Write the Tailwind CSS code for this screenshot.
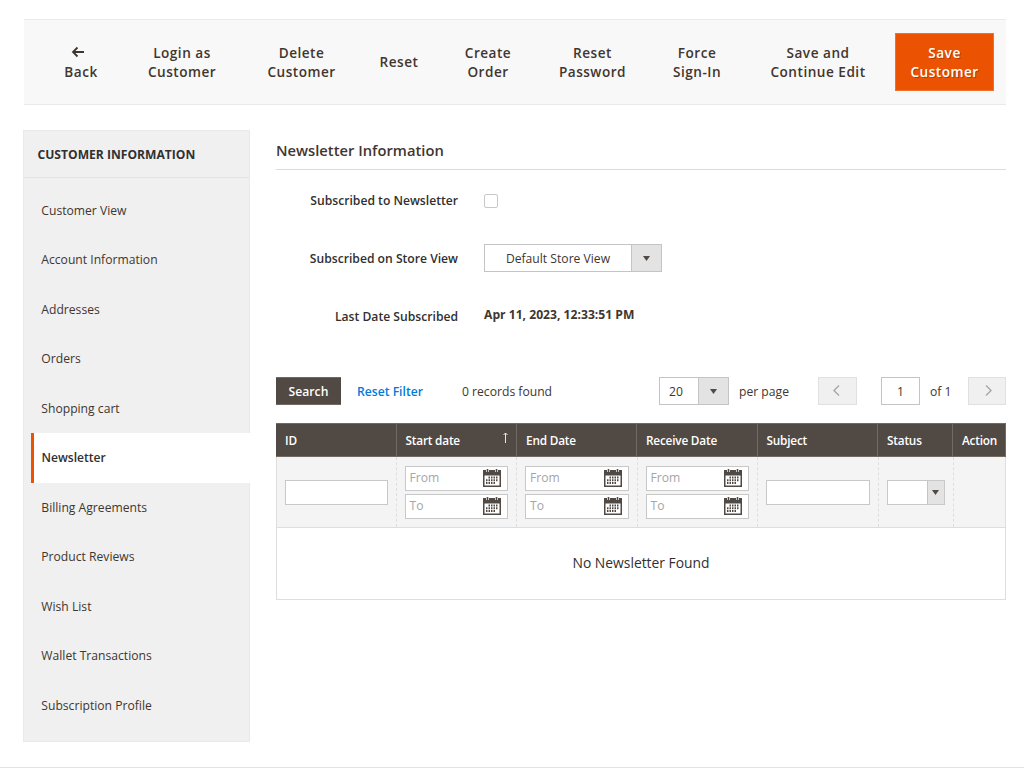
<!DOCTYPE html>
<html lang="en">
<head>
    <meta charset="UTF-8">
    <meta name="viewport" content="width=device-width, initial-scale=1.0">
    <title>Customer - Newsletter</title>
    <script src="https://cdn.jsdelivr.net/npm/@tailwindcss/browser@4"></script>
</head>
<body class="bg-white font-['Open_Sans','Noto_Sans',sans-serif] text-[12.150px] text-[#41362f] h-[768px] overflow-hidden">
    <svg class="hidden">
        <symbol id="calendar" viewBox="0 0 18 18">
            <path d="M0 1h18v17H0z" fill="#514943"/>
            <path d="M1.500 6.500h15v10h-15z" fill="#fff"/>
            <path d="M3 0h3v3H3zM12 0h3v3h-3z" fill="#c9c6c3"/>
            <path d="M4 0h1v4H4zM13 0h1v4h-1z" fill="#514943"/>
            <path d="M8 7.500h1.500v2H8zM10.500 7.500H12v2h-1.500zM13 7.500h1.500v2H13zM5.500 7.500H7v2H5.500zM5.500 10.200H7v2H5.500zM8 10.200h1.500v2H8zM10.500 10.200H12v2h-1.500zM13 10.200h1.500v2H13zM3 10.200h1.500v2H3zM3 13h1.500v2H3zM5.500 13H7v2H5.500zM8 13h1.500v2H8zM10.500 13H12v2h-1.500z" fill="#514943"/>
        </symbol>
    </svg>

    <!-- Page actions -->
    <header class="mt-[19px] ml-6 w-[982px] h-[86px] flex items-center bg-[#f8f8f8] border-y border-[#e9e9e9] pl-[7px] text-[13.600px] leading-[19px] font-semibold tracking-[0.5px] text-center text-[#41362f]">
        <button class="w-[100px] h-[40px]">
            <svg class="block mx-auto h-[18px] w-[14px] -translate-x-[3px] -translate-y-px" viewBox="0 0 14 18" fill="none" stroke="#41362f" stroke-width="1.800"><path d="M13 9H2M6.500 4.500L2 9l4.500 4.500"/></svg>
            <span class="block">Back</span>
        </button>
        <button class="w-[102px] pb-px">Login as<br>Customer</button>
        <button class="w-[137px] pb-px">Delete<br>Customer</button>
        <button class="w-[58px] pb-px">Reset</button>
        <button class="w-[120px] pb-px">Create<br>Order</button>
        <button class="w-[89px] pb-px">Reset<br>Password</button>
        <button class="w-[120px] pb-px">Force<br>Sign-In</button>
        <button class="w-[122px] pb-px">Save and<br>Continue Edit</button>
        <button class="ml-4 w-[99px] h-[58px] pb-px bg-[#eb5202] border border-[#f0702c] text-white [text-shadow:1px_1px_0_rgba(0,0,0,0.25)]">Save<br>Customer</button>
    </header>

    <div class="mt-[25px] ml-[23px] flex items-start">
        <!-- Tabs -->
        <aside class="w-[227px] h-[612px] shrink-0 bg-[#f0f0f0] border border-[#e9e9e9]">
            <h2 class="h-[47px] pl-[13.500px] leading-[47px] border-b border-[#e3e3e3] font-bold text-[12.100px] text-[#303030]">CUSTOMER INFORMATION</h2>
            <nav class="pt-[7.500px] leading-[49.550px] text-[#41362f]">
                <a class="block h-[49.550px] pl-[17.300px]">Customer View</a>
                <a class="block h-[49.550px] pl-[17.300px]">Account Information</a>
                <a class="block h-[49.550px] pl-[17.300px]">Addresses</a>
                <a class="block h-[49.550px] pl-[17.300px]">Orders</a>
                <a class="block h-[49.550px] pl-[17.300px]">Shopping cart</a>
                <a class="block h-[49.550px] ml-[6.500px] -mr-px pl-[8px] bg-white border-l-[3px] border-[#eb5202] font-semibold text-[12.100px] text-[#303030]">Newsletter</a>
                <a class="block h-[49.550px] pl-[17.300px]">Billing Agreements</a>
                <a class="block h-[49.550px] pl-[17.300px]">Product Reviews</a>
                <a class="block h-[49.550px] pl-[17.300px]">Wish List</a>
                <a class="block h-[49.550px] pl-[17.300px]">Wallet Transactions</a>
                <a class="block h-[49.550px] pl-[17.300px]">Subscription Profile</a>
            </nav>
        </aside>

        <main class="ml-[26px] pt-px w-[730px]">
            <h1 class="h-[39px] leading-[38px] border-b border-[#dcdccf] text-[14.750px] font-semibold text-[#41362f]">Newsletter Information</h1>

            <div class="grid grid-cols-[182px_1fr] gap-x-[26px] auto-rows-[58px] items-center pt-[2px] font-semibold text-[12.150px] text-[#303030]">
                <label class="text-right" for="subscribed">Subscribed to Newsletter</label>
                <input type="checkbox" id="subscribed" class="appearance-none size-[14px] bg-white border border-[#c8c8c8] rounded-[2px]">
                <label class="text-right pt-px">Subscribed on Store View</label>
                <div class="flex w-[178px] h-[28px] -mt-[2px] border border-[#c4c4c4] font-normal text-[12.150px] text-[#41362f]">
                    <span class="flex-1 leading-[27px] text-center">Default Store View</span>
                    <span class="w-[30px] flex items-center justify-center bg-[#e3e3e3] border-l border-[#c4c4c4]"><svg class="w-[7px] h-[5px]" viewBox="0 0 7 5"><path d="M0 0h7L3.500 5z" fill="#514943"/></svg></span>
                </div>
                <label class="text-right pt-px">Last Date Subscribed</label>
                <span class="-mt-[3px] font-bold text-[#41362f]">Apr 11, 2023, 12:33:51 PM</span>
            </div>

            <!-- Grid toolbar -->
            <div class="mt-[31px] h-[28px] flex leading-[29px]">
                <button class="w-[65px] bg-[#514943] border-y border-[#736963] leading-[27px] font-semibold text-[12.200px] text-white">Search</button>
                <button class="w-[66px] ml-4 font-semibold text-[12.150px] whitespace-nowrap text-[#007bdb]">Reset Filter</button>
                <span class="w-[158px] ml-[39px]">0 records found</span>
                <div class="w-[70px] ml-[39px] flex border border-[#c4c4c4] leading-[27px]">
                    <span class="flex-1 pl-[9px]">20</span>
                    <span class="w-[30px] flex items-center justify-center bg-[#e3e3e3] border-l border-[#c4c4c4]"><svg class="w-[7px] h-[5px]" viewBox="0 0 7 5"><path d="M0 0h7L3.500 5z" fill="#514943"/></svg></span>
                </div>
                <span class="w-[79px] pl-[10px]">per page</span>
                <button class="ml-[10px] w-[39px] flex items-center justify-center bg-[#f0f0f0] border border-[#e0e0e0]"><svg class="w-[7px] h-[11px] -translate-x-px -translate-y-px" viewBox="0 0 7 11" fill="none" stroke="#aaa6a2" stroke-width="1.400"><path d="M6 .5l-5 5 5 5"/></svg></button>
                <span class="ml-6 w-[39px] border border-[#c4c4c4] text-center leading-[27px]">1</span>
                <span class="w-[48px] pl-[10px]">of 1</span>
                <button class="w-[38px] flex items-center justify-center bg-[#f0f0f0] border border-[#e0e0e0]"><svg class="w-[7px] h-[11px] translate-x-px -translate-y-px" viewBox="0 0 7 11" fill="none" stroke="#aaa6a2" stroke-width="1.400"><path d="M1 .5l5 5-5 5"/></svg></button>
            </div>

            <!-- Newsletter grid -->
            <div class="mt-[18px]">
                <div class="grid grid-cols-[120.500px_120.500px_120px_120.500px_120.500px_75px_53px] h-[34px] leading-[32px] bg-[#514943] border-y border-[#736963] text-[11.800px] tracking-[-0.2px] font-semibold text-white *:pl-[9px] *:border-r *:border-[#736963]">
                    <div>ID</div>
                    <div class="flex">Start date
                        <svg class="ml-auto mr-[7px] mt-[8px] w-[7px] h-[11px]" viewBox="0 0 7 11" fill="none" stroke="#e8e6e4"><path d="M3.500 11V1M1.500 3L3.500 1 5.500 3"/></svg>
                    </div>
                    <div>End Date</div>
                    <div>Receive Date</div>
                    <div>Subject</div>
                    <div>Status</div>
                    <div>Action</div>
                </div>
                <div class="grid grid-cols-[119.500px_120.500px_120.500px_120.500px_120.500px_75px_52px] h-[71px] bg-[#f4f4f4] border-b border-x border-[#dedede] text-[12.150px] text-[#a6a6a6] *:px-[8px] *:flex *:flex-col *:justify-center *:gap-[3px] *:border-r *:border-dashed *:border-[#dedede]">
                    <div><span class="h-[25px] border border-[#c8c8c8] bg-white"></span></div>
                    <div>
                        <span class="h-[25px] border border-[#c8c8c8] bg-white flex items-center justify-between pl-[4px] pr-[6px]">From<svg class="size-[18px]"><use href="#calendar"/></svg></span>
                        <span class="h-[25px] border border-[#c8c8c8] bg-white flex items-center justify-between pl-[4px] pr-[6px]">To<svg class="size-[18px]"><use href="#calendar"/></svg></span>
                    </div>
                    <div>
                        <span class="h-[25px] border border-[#c8c8c8] bg-white flex items-center justify-between pl-[4px] pr-[6px]">From<svg class="size-[18px]"><use href="#calendar"/></svg></span>
                        <span class="h-[25px] border border-[#c8c8c8] bg-white flex items-center justify-between pl-[4px] pr-[6px]">To<svg class="size-[18px]"><use href="#calendar"/></svg></span>
                    </div>
                    <div>
                        <span class="h-[25px] border border-[#c8c8c8] bg-white flex items-center justify-between pl-[4px] pr-[6px]">From<svg class="size-[18px]"><use href="#calendar"/></svg></span>
                        <span class="h-[25px] border border-[#c8c8c8] bg-white flex items-center justify-between pl-[4px] pr-[6px]">To<svg class="size-[18px]"><use href="#calendar"/></svg></span>
                    </div>
                    <div><span class="h-[25px] border border-[#c8c8c8] bg-white"></span></div>
                    <div>
                        <span class="h-[25px] border border-[#c8c8c8] bg-white flex justify-end"><span class="w-[17px] flex items-center justify-center bg-[#e3e3e3] border-l border-[#c4c4c4]"><svg class="w-[7px] h-[5px]" viewBox="0 0 7 5"><path d="M0 0h7L3.500 5z" fill="#514943"/></svg></span></span>
                    </div>
                </div>
                <div class="h-[72px] leading-[70px] border border-t-0 border-[#dedede] text-center text-[13.850px] text-[#303030]">No Newsletter Found</div>
            </div>
        </main>
    </div>
    <footer class="mt-[25px] border-t border-[#e3e3e3]"></footer>
</body>
</html>
